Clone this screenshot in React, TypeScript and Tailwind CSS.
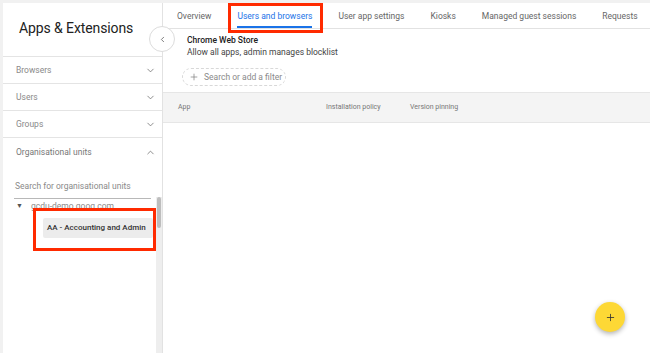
import { ChevronDown, ChevronUp, ChevronLeft, Plus } from "lucide-react";

const font = { fontFamily: "Roboto, 'Liberation Sans', sans-serif" };

const SideRow = ({ label, open }: { label: string; open?: boolean }) => (
  <div className="h-[27px] border-b border-[#e4e4e4] flex items-center justify-between pl-[13px] pr-[6px]">
    <span className="text-[8.5px] text-[#8a8a8a]">{label}</span>
    {open ? (
      <ChevronUp size={11} strokeWidth={1.6} className="text-[#666]" />
    ) : (
      <ChevronDown size={11} strokeWidth={1.6} className="text-[#666]" />
    )}
  </div>
);

const tabs = [
  "Overview",
  "Users and browsers",
  "User app settings",
  "Kiosks",
  "Managed guest sessions",
  "Requests",
];

const App = () => {
  return (
    <div
      className="relative w-[650px] h-[353px] overflow-hidden bg-[#f1f1f1] flex pt-[3px] pl-[3px] pr-[2px]"
      style={font}
    >
      {/* sidebar */}
      <div className="relative w-[162px] h-full bg-white border-r border-[#e2e2e2] flex flex-col">
        <div className="h-[54px] border-b border-[#e4e4e4] flex items-center pl-[16px] pb-[2px]">
          <h1 className="text-[14px] text-[#222] tracking-[-0.1px]">Apps &amp; Extensions</h1>
        </div>
        <SideRow label="Browsers" />
        <SideRow label="Users" />
        <SideRow label="Groups" />
        <div className="h-[28px] flex items-center justify-between pl-[13px] pr-[6px] pt-[1px]">
          <span className="text-[8.5px] text-[#777]">Organisational units</span>
          <ChevronUp size={11} strokeWidth={1.6} className="text-[#666]" />
        </div>
        <div className="mx-[11px] mt-[6px] w-[137px] border-b border-[#b8b8b8] pb-[2px] pl-[1px]">
          <span className="text-[8.5px] text-[#8a8a8a]">Search for organisational units</span>
        </div>
        <div className="flex items-center mt-[1px] pl-[13px] gap-[8px]">
          <span className="text-[7px] text-[#555]">▼</span>
          <span className="text-[8.5px] text-[#8a8a8a]">gcdu-demo.goog.com</span>
        </div>
        <div className="ml-[40px] mt-[5px] mr-[9px] h-[20px] bg-[#ececec] rounded-[2px] flex items-center pl-[4px]">
          <span className="text-[8px] font-medium text-[#333] whitespace-nowrap">
            AA - Accounting and Admin
          </span>
        </div>
        {/* scrollbar */}
        <div className="absolute right-0 top-[194px] bottom-0 w-[6px] bg-[#eeeeee]">
          <div className="h-[31px] mx-[1px] rounded-full bg-[#bdbdbd]" />
        </div>
        {/* collapse button */}
        <div className="absolute top-[23px] right-[-13px] w-[26px] h-[26px] rounded-full bg-white border border-[#dcdcdc] flex items-center justify-center z-10">
          <ChevronLeft size={9} strokeWidth={2} className="text-[#555]" />
        </div>
      </div>

      {/* main */}
      <div className="relative flex-1 h-full bg-white border-r border-[#e2e2e2] flex flex-col">
        <div className="h-[26px] border-b border-[#e2e2e2] flex items-end pl-[14px]">
          {tabs.map((t, i) => (
            <div
              key={t}
              className={
                i === 1
                  ? "h-full flex items-center pt-[3px] mr-[26px] border-b-2 border-[#1a73e8] text-[#1a73e8]"
                  : "h-full flex items-center pt-[1px] mr-[26px] text-[#666]"
              }
            >
              <span className="text-[8.5px] whitespace-nowrap">{t}</span>
            </div>
          ))}
        </div>
        <div className="pl-[24px] pt-[6px]">
          <div className="text-[8.5px] font-medium text-[#222] leading-[11px]">Chrome Web Store</div>
          <div className="text-[8.5px] text-[#444] leading-[11px] mt-[1px]">
            Allow all apps, admin manages blocklist
          </div>
        </div>
        <div className="ml-[19px] mt-[10px] w-[104px] h-[18px] rounded-full border border-dashed border-[#d8d8d8] flex items-center pl-[6px] gap-[5px]">
          <Plus size={10} strokeWidth={1.6} className="text-[#777]" />
          <span className="text-[8.5px] text-[#8a8a8a]">Search or add a filter</span>
        </div>
        <div className="mt-[6px] h-[31px] bg-[#f4f4f4] border-y border-[#e6e6e6] flex items-center pl-[15px]">
          <span className="text-[7px] text-[#777] w-[148px]">App</span>
          <span className="text-[7px] text-[#777] w-[84px]">Installation policy</span>
          <span className="text-[7px] text-[#777]">Version pinning</span>
        </div>
        <div className="flex-1" />
        {/* FAB */}
        <div className="absolute left-[432px] top-[299px] w-[30px] h-[30px] rounded-full bg-[#fdd835] shadow-[0_2px_5px_rgba(0,0,0,0.3)] flex items-center justify-center">
          <Plus size={11} strokeWidth={1.8} className="text-[#333]" />
        </div>
      </div>

      {/* annotation boxes */}
      <div className="absolute left-[228px] top-[3px] w-[95px] h-[30px] border-[3px] border-[#ff2a00]" />
      <div className="absolute left-[33px] top-[208px] w-[123px] h-[43px] border-[3px] border-[#ff2a00]" />
    </div>
  );
};

export default App;
